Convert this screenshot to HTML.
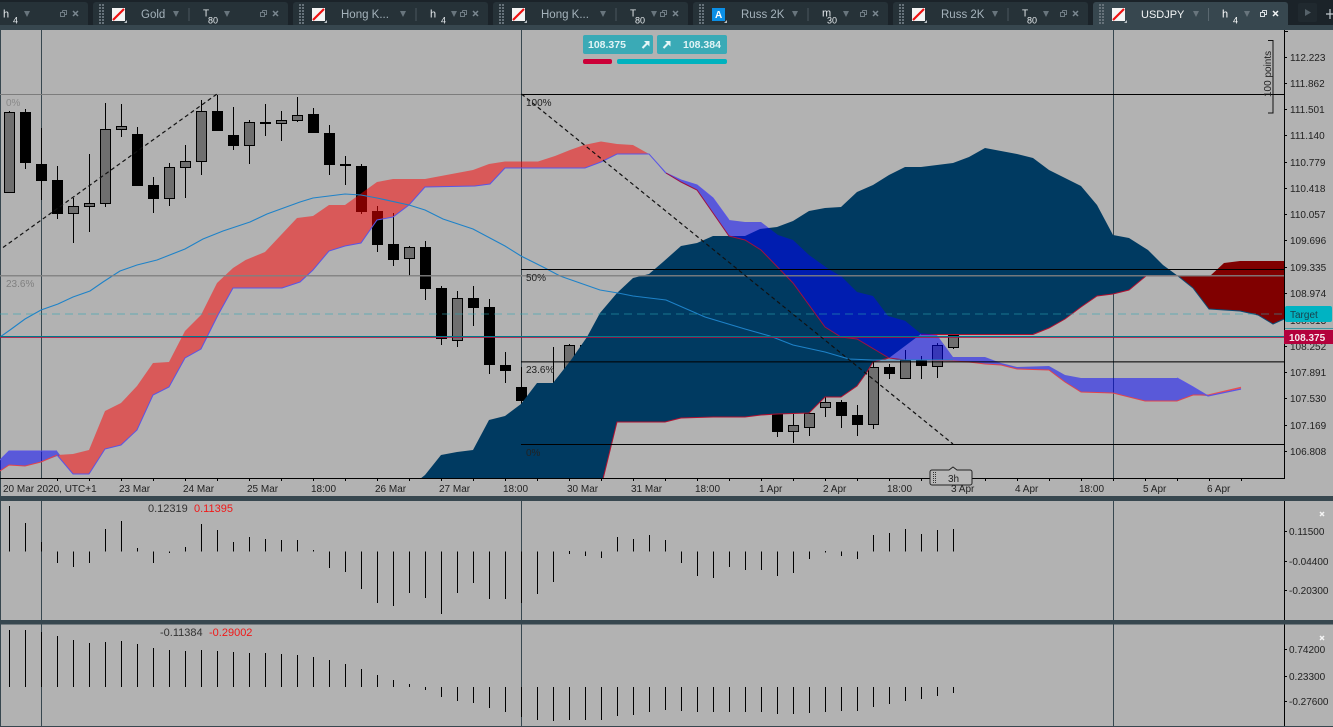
<!DOCTYPE html>
<html><head><meta charset="utf-8"><title>USDJPY</title>
<style>
html,body{margin:0;padding:0;background:#b2b2b2;overflow:hidden}
svg{display:block;font-family:"Liberation Sans",sans-serif}
.ax{font-size:10px;fill:#222}
.t{font-size:10px;fill:#222}
.n{font-size:11.5px;fill:#a4b2bb}
.w{font-size:10px;fill:#e4e9ec}
.s{font-size:9px;fill:#e4e9ec}
</style></head><body>
<svg width="1333" height="727" viewBox="0 0 1333 727" xmlns="http://www.w3.org/2000/svg">
<defs>
<g id="grip"><path d="M0 4V24M3 4V24" stroke="#66727a" stroke-width="2" stroke-dasharray="2 1" fill="none"/></g>
<g id="ic"><rect x="0" y="8" width="13" height="13" fill="#f4f4f4"/><path d="M1 20L12 9" stroke="#f01010" stroke-width="2.200"/><path d="M15 23h-3l3-3z" fill="#b8c0c4"/></g>
<g id="rs"><path d="M2.500 10.500h4v4h-2M0.500 12.500h4v4h-4zM2.500 10.500v2" fill="none" stroke="#6f7c84"/></g>
<g id="cl"><path d="M0 11l5 5M5 11l-5 5" stroke="#7a8790" stroke-width="1.500" fill="none"/></g>
<path id="tr" d="M0 11h6l-3 6z" fill="#68757d"/>
</defs>

<!-- chart background -->
<rect width="1333" height="727" fill="#b2b2b2"/>

<!-- tab bar -->
<rect width="1333" height="30" fill="#1b2329"/>
<rect y="25" width="1333" height="5" fill="#37474f"/>
<path d="M0 2H85a3 3 0 0 1 3 3V25H0z" fill="#263238"/>
<g fill="#263238">
<rect x="93" y="2" width="195" height="25" rx="3"/>
<rect x="293" y="2" width="195" height="25" rx="3"/>
<rect x="493" y="2" width="195" height="25" rx="3"/>
<rect x="693" y="2" width="195" height="25" rx="3"/>
<rect x="893" y="2" width="195" height="25" rx="3"/>
</g>
<rect y="25" width="1333" height="5" fill="#37474f"/>
<rect x="1093" y="2" width="195" height="28" rx="3" fill="#37474f"/>
<rect y="27" x="1093" width="195" height="3" fill="#37474f"/>
<rect x="1298" y="3" width="19" height="19" rx="2" fill="#20292f"/>
<path d="M1305 9l6 3.500-6 3.500z" fill="#56626a"/>
<path d="M1326 14h7M1330 9v10" stroke="#c4ccd0" stroke-width="1.200"/>

<!-- tab 1 -->
<text x="3" y="17.500" class="w" style="font-size:11px">h</text><text x="13" y="23.500" class="s">4</text>
<use href="#tr" x="24"/><use href="#rs" x="60"/><use href="#cl" x="73"/>
<!-- tab 2 -->
<use href="#grip" x="100"/><use href="#ic" x="112"/><text x="141" y="18" class="n">Gold</text><use href="#tr" x="173"/>
<rect x="188.500" y="8" width="1" height="13" fill="#4a565e"/>
<text x="203" y="16.500" class="w">T</text><text x="208" y="23.500" class="s">80</text>
<use href="#tr" x="224"/><use href="#rs" x="260"/><use href="#cl" x="273"/>
<!-- tab 3 -->
<use href="#grip" x="300"/><use href="#ic" x="312"/><text x="341" y="18" class="n">Hong K...</text><use href="#tr" x="400"/>
<rect x="415.500" y="8" width="1" height="13" fill="#4a565e"/>
<text x="430" y="17.500" class="w" style="font-size:11px">h</text><text x="441" y="23.500" class="s">4</text>
<use href="#tr" x="451"/><use href="#rs" x="460"/><use href="#cl" x="473"/>
<!-- tab 4 -->
<use href="#grip" x="500"/><use href="#ic" x="512"/><text x="541" y="18" class="n">Hong K...</text><use href="#tr" x="600"/>
<rect x="615.500" y="8" width="1" height="13" fill="#4a565e"/>
<text x="630" y="16.500" class="w">T</text><text x="635" y="23.500" class="s">80</text>
<use href="#tr" x="651"/><use href="#rs" x="660"/><use href="#cl" x="673"/>
<!-- tab 5 -->
<use href="#grip" x="700"/><rect x="712" y="8" width="13" height="13" fill="#0b8fe6"/><text x="715" y="18" style="font-size:10px;font-weight:bold;fill:#fff">A</text><path d="M727 23h-3l3-3z" fill="#b8c0c4"/>
<text x="741" y="18" class="n">Russ 2K</text><use href="#tr" x="792"/>
<rect x="807.500" y="8" width="1" height="13" fill="#4a565e"/>
<text x="822" y="16.500" class="w" style="font-size:11px">m</text><text x="827" y="23.500" class="s">30</text>
<use href="#tr" x="843"/><use href="#rs" x="860"/><use href="#cl" x="873"/>
<!-- tab 6 -->
<use href="#grip" x="900"/><use href="#ic" x="912"/><text x="941" y="18" class="n">Russ 2K</text><use href="#tr" x="992"/>
<rect x="1007.500" y="8" width="1" height="13" fill="#4a565e"/>
<text x="1022" y="16.500" class="w">T</text><text x="1027" y="23.500" class="s">80</text>
<use href="#tr" x="1043"/><use href="#rs" x="1060"/><use href="#cl" x="1073"/>
<!-- tab 7 active -->
<use href="#grip" x="1100"/><use href="#ic" x="1112"/><text x="1141" y="18" class="n" style="fill:#f2f5f6;font-size:11px">USDJPY</text><use href="#tr" x="1193"/>
<rect x="1208" y="8" width="1" height="13" fill="#5a6870"/>
<text x="1222" y="17.500" class="w" style="font-size:11px;fill:#fff">h</text><text x="1233" y="23.500" class="s" style="fill:#fff">4</text>
<use href="#tr" x="1244"/>
<g transform="translate(1260,0)"><path d="M2.500 10.500h4v4h-2M0.500 12.500h4v4h-4zM2.500 10.500v2" fill="none" stroke="#d8dfe3"/></g>
<g transform="translate(1273,0)"><path d="M0 11l5 5M5 11l-5 5" stroke="#f0f3f4" stroke-width="1.500"/></g>

<!-- left border and vertical grid -->
<rect x="0" y="30" width="1" height="697" fill="#37474f"/>
<path d="M41.500 30V478M521.500 30V478M1113.500 30V478M41.500 500V620M521.500 500V620M1113.500 500V620M41.500 624V726M521.500 624V726M1113.500 624V726" stroke="#37474f" fill="none"/>

<!-- wicks -->
<path stroke="#000" fill="none" d="M9.500 111V193M25.500 109V169M41.500 128V200M57.500 166V219M73.500 198V243M89.500 154V232M105.500 103V207M121.500 104V137M137.500 127V186M153.500 177V213M169.500 163V206M185.500 145V198M201.500 100V175M217.500 94V131M233.500 107V150M249.500 120V164M265.500 104V136M281.500 111V141M297.500 97V122M313.500 108V133M329.500 125V175M345.500 156V185M361.500 164V214M377.500 206V252M393.500 213V266M409.500 246V276M425.500 241V300M441.500 286V345M457.500 291V347M473.500 286V326M489.500 299V374M505.500 352V383M521.500 367V405M553.500 347V383M569.500 344V370M585.500 340V370M777.500 410V437M793.500 414V443M809.500 410V436M825.500 397V417M841.500 400V428M857.500 405V436M873.500 360V429M889.500 364V379M905.500 350V379M921.500 356V379M937.500 343V378M953.500 333V349"/>
<!-- gray bodies -->
<path fill="#6f6f6f" stroke="#000" d="M4.500 112.500h10v80h-10zM68.500 206.500h10v7h-10zM84.500 203.500h10v3h-10zM100.500 129.500h10v74h-10zM116.500 126.500h10v3h-10zM164.500 167.500h10v31h-10zM180.500 161.500h10v6h-10zM196.500 111.500h10v50h-10zM244.500 122.500h10v23h-10zM276.500 120.500h10v3h-10zM292.500 115.500h10v5h-10zM404.500 247.500h10v11h-10zM452.500 298.500h10v42h-10zM564.500 345.500h10v23h-10zM788.500 425.500h10v6h-10zM804.500 413.500h10v14h-10zM820.500 402.500h10v5h-10zM868.500 367.500h10v57h-10zM900.500 360.500h10v18h-10zM932.500 345.500h10v21h-10zM948.500 335.500h10v12h-10z"/>
<!-- black bodies -->
<path fill="#000" stroke="#000" d="M20.500 112.500h10v50h-10zM36.500 164.500h10v16h-10zM52.500 180.500h10v33h-10zM132.500 134.500h10v51h-10zM148.500 185.500h10v13h-10zM212.500 111.500h10v19h-10zM228.500 135.500h10v10h-10zM260.500 122.500h10v1h-10zM308.500 114.500h10v18h-10zM324.500 133.500h10v31h-10zM340.500 164.500h10v1h-10zM356.500 166.500h10v45h-10zM372.500 211.500h10v33h-10zM388.500 244.500h10v15h-10zM420.500 247.500h10v41h-10zM436.500 288.500h10v50h-10zM468.500 298.500h10v9h-10zM484.500 307.500h10v57h-10zM500.500 365.500h10v5h-10zM516.500 387.500h10v13h-10zM580.500 345.500h10v20h-10zM772.500 413.500h10v18h-10zM836.500 402.500h10v13h-10zM852.500 415.500h10v9h-10zM884.500 367.500h10v6h-10zM916.500 360.500h10v5h-10z"/>

<!-- navy cloud -->
<path fill="#003a61" d="M420 479L425 475L441 455L457 452L473 450L489 420L505 416L521 404L537 383L553 383L571 360L587 337L600 313L617 293L633 278L649 274L663 262L681 246L697 243L713 236L745 236L760 229L777 227L793 221L809 211L825 208L841 207L857 192L873 185L889 175L905 167L921 167L937 165L953 163L969 157L985 148L1001 151L1017 154L1033 158L1049 170L1065 178L1081 186L1097 205L1113 235L1129 238L1148 250L1163 265L1178 276L1146 276L1129 290L1113 294L1097 296L1081 307L1065 319L1049 328L1033 334L921 334L905 346L889 358L873 362L867 372L857 386L841 397L825 397L809 413L777 414L761 415L745 417L713 417L681 418L665 422L617 422L603 479z"/>
<path fill="none" stroke="#b01030" stroke-width="1" d="M603 479L617 422L665 422L681 418L713 417L745 417L761 415L777 414L809 413L825 397L841 397L857 386L867 372L873 362L889 358"/>
<path fill="none" stroke="#b01030" stroke-width="1" d="M921 334.500L1033 334.500L1049 328L1065 319L1081 307L1097 296L1113 294L1129 290L1146 276L1178 276"/>

<!-- dark red cloud right -->
<path fill="#800000" d="M1178 276L1210 276L1224 263L1240 261L1284 261L1284 319L1273 324L1258 315L1240 311L1209 309L1193 288z"/>
<path fill="none" stroke="#0f4a72" d="M1178 276L1193 288L1209 309L1240 311L1258 315L1273 324L1284 319"/>

<!-- red translucent cloud -->
<path fill="#f00" fill-opacity=".5" d="M57 455L73 454L89 450L105 411L121 403L137 386L153 363L169 362L185 331L201 315L217 283L233 268L245.600 260L265 252L297 218L313 216L329 205L345 205L377 182L393 179L425 179L457 173L473 170L489 164L505 161.500L538 161.500L555 156L570 150L584 145L601 141.500L617 144L633 145L649 154L617 154L601 162L585 168L505 168L490 184L475 186L425 187L409 205L393 217L377 220L361 243L345 246L329 251L313 270L300 282L282 288L233 288L218 315L201 349L185 358L169 387L153 395L137 430L121 445L105 449L89 474L73 474z"/>
<!-- blue translucent cloud -->
<path fill="#00f" fill-opacity=".5" d="M0 460L9 451L57 451L60 455L41 462L25 466L9 465L0 471zM649 154L666 173L681 180L697 185L713 198L729 220L745 222L761 222L778 235L793 240L809 255L827 268L842 277L857 292L873 296L888 316L905 320.700L920 333L937 335L953 357L985 357L1001 363L1017 367L1049 366L1065 375L1081 378L1177 378L1193 387L1208 396L1193 395L1177 401L1145 401L1113 393L1081 392L1065 382L1049 370L1017 369L1001 365L985 364L969 362L953 361L921 360L905 360L889 358L857 339L841 337L825 327L793 283L761 250L745 240L729 236L713 213L697 190L681 182L665 173z"/>
<!-- cloud edge lines -->
<path fill="none" stroke="#5a55e6" stroke-width="1" d="M0 460L9 451L57 451M57 455L73 474L89 474L105 449L121 445L137 430L153 395L169 387L185 358L201 349L218 315L233 288L282 288L300 282L313 270L329 251L345 246L361 243L377 220L393 217L409 205L425 187L475 186L490 184L505 168L585 168L601 162L617 154L649 154L666 173L681 180L697 185L713 198L729 220"/>
<path fill="none" stroke="#e2444c" stroke-width="1" d="M0 471L9 465L25 466L41 462L57 455"/>
<path fill="none" stroke="#a01040" stroke-width="1" d="M666 173L681 182L697 190L713 213L729 236L745 240L761 250L793 283L825 327L841 337L857 339L889 358L905 360L921 360"/>
<path fill="none" stroke="#e2444c" stroke-width="1" d="M921 360L953 361L969 362L985 364L1001 365L1017 369L1049 370L1065 382L1081 392L1113 393L1145 401L1177 401L1193 395L1209 395"/>
<path fill="none" stroke="#e85050" stroke-width="1.600" d="M1209 395L1241 387.500"/>
<path fill="none" stroke="#5a55e6" stroke-width="1.200" d="M1177 378L1193 387L1208 396L1241 389"/>

<!-- SMA line -->
<path fill="none" stroke="#1e82c8" stroke-width="1.100" d="M0 337L10 330L25 319L41 310L58 304L73 297L90 291L103 282L120 271L137 265L157 260L185 249L203 239L223 231L250 222L267 214L300 202L313 198L345 194L361 195L377 198L409 205L425 210L443 219L473 229L505 246L521 256L545 268L560 276L600 290L618 293L633 296L666 300L705 317L745 329L770 336L793 345L825 352L849 359L873 360L953 360"/>

<!-- horizontal lines -->
<rect x="0" y="94" width="521" height="1" fill="#7c7c7c"/>
<rect x="521" y="94" width="763" height="1" fill="#000"/>
<rect x="521" y="269" width="763" height="1" fill="#000"/>
<rect x="0" y="275" width="1284" height="1.500" fill="#808080" fill-opacity=".9"/>
<rect x="521" y="361" width="763" height="1.600" fill="#000" fill-opacity=".65"/>
<rect x="521" y="444" width="763" height="1" fill="#000"/>
<path d="M0 314H1284" stroke="#2aa7b3" stroke-opacity=".45" stroke-width="1.200" stroke-dasharray="8 5"/>
<rect x="0" y="336" width="1284" height="1" fill="#00788a"/>
<rect x="0" y="337" width="1284" height="1" fill="#b01040" fill-opacity=".8"/>

<!-- dashed fib lines -->
<path d="M3 247.500L217 94M521.500 94L953 444" stroke="#111" stroke-width="1.200" stroke-dasharray="4 3" fill="none"/>

<!-- fib labels -->
<g class="t">
<text x="6" y="106" style="fill:#8a8a8a">0%</text>
<text x="6" y="287" style="fill:#808080">23.6%</text>
<text x="526" y="106">100%</text>
<text x="526" y="281">50%</text>
<text x="526" y="373">23.6%</text>
<text x="526" y="456">0%</text>
</g>

<!-- 100 points -->
<path d="M1268 40.500h5V113h-5" stroke="#111" fill="none"/>
<text transform="translate(1271,97) rotate(-90)" class="t">100 points</text>

<!-- axes -->
<rect x="0" y="478" width="1285" height="1" fill="#000"/>
<rect x="1284" y="30" width="1" height="449" fill="#000"/>
<rect x="1284" y="500" width="1" height="120" fill="#000"/>
<rect x="1284" y="624" width="1" height="102" fill="#000"/>
<path stroke="#000" d="M57.500 478v3M89.500 478v3M121.500 478v3M153.500 478v3M185.500 478v3M217.500 478v3M249.500 478v3M281.500 478v3M313.500 478v3M345.500 478v3M377.500 478v3M409.500 478v3M441.500 478v3M473.500 478v3M505.500 478v3M537.500 478v3M569.500 478v3M601.500 478v3M633.500 478v3M665.500 478v3M697.500 478v3M729.500 478v3M761.500 478v3M793.500 478v3M825.500 478v3M857.500 478v3M889.500 478v3M921.500 478v3M953.500 478v3M985.500 478v3M1017.500 478v3M1049.500 478v3M1081.500 478v3M1113.500 478v3M1145.500 478v3M1177.500 478v3M1209.500 478v3M1241.500 478v3"/>
<path stroke="#000" d="M1285 31.500h3M1285 57.500h2M1285 83.500h2M1285 109.500h2M1285 135.500h2M1285 162.500h2M1285 188.500h2M1285 214.500h2M1285 240.500h2M1285 267.500h2M1285 293.500h2M1285 346.500h2M1285 372.500h2M1285 398.500h2M1285 425.500h2M1285 451.500h2M1285 531.500h2M1285 561.500h2M1285 590.500h2M1285 649.500h2M1285 676.500h2M1285 701.500h2"/>

<!-- time labels -->
<g class="t">
<text x="3" y="492">20 Mar 2020, UTC+1</text>
<text x="119" y="492">23 Mar</text>
<text x="183" y="492">24 Mar</text>
<text x="247" y="492">25 Mar</text>
<text x="311" y="492">18:00</text>
<text x="375" y="492">26 Mar</text>
<text x="439" y="492">27 Mar</text>
<text x="503" y="492">18:00</text>
<text x="567" y="492">30 Mar</text>
<text x="631" y="492">31 Mar</text>
<text x="695" y="492">18:00</text>
<text x="759" y="492">1 Apr</text>
<text x="823" y="492">2 Apr</text>
<text x="887" y="492">18:00</text>
<text x="1015" y="492">4 Apr</text>
<text x="1079" y="492">18:00</text>
<text x="1143" y="492">5 Apr</text>
<text x="1207" y="492">6 Apr</text>
</g>

<!-- price labels -->
<g class="ax">
<text x="1290" y="61">112.223</text>
<text x="1290" y="87">111.862</text>
<text x="1290" y="113">111.501</text>
<text x="1290" y="139">111.140</text>
<text x="1290" y="166">110.779</text>
<text x="1290" y="192">110.418</text>
<text x="1290" y="218">110.057</text>
<text x="1290" y="244">109.696</text>
<text x="1290" y="271">109.335</text>
<text x="1290" y="297">108.974</text>
<text x="1290" y="324">108.613</text>
<text x="1290" y="350">108.252</text>
<text x="1290" y="376">107.891</text>
<text x="1290" y="402">107.530</text>
<text x="1290" y="429">107.169</text>
<text x="1290" y="455">106.808</text>
</g>

<!-- Target and price tags -->
<rect x="1285" y="306" width="47" height="16" rx="2" fill="#00b3c2"/>
<text x="1290" y="318" class="ax" style="fill:#17424d">Target</text>
<rect x="1285" y="328" width="48" height="1" fill="#3f97a3"/>
<rect x="1284" y="330" width="49" height="14" fill="#b3003c"/>
<text x="1289" y="341" style="font-size:10px;font-weight:bold;fill:#f6e8ee">108.375</text>

<!-- 3h tag -->
<path d="M953 467l4 3h13a2 2 0 0 1 2 2v11a2 2 0 0 1-2 2h-38a2 2 0 0 1-2-2v-11a2 2 0 0 1 2-2h17z" fill="#b8b8b8" stroke="#222"/>
<path d="M933.500 472V484M935.500 472V484" stroke="#333" stroke-dasharray="1 1"/>
<text x="948" y="482" class="t">3h</text>
<text x="951" y="492" class="t">3 Apr</text>

<!-- bid/ask widget -->
<rect x="583" y="35" width="70" height="19" rx="2" fill="#3aaab6"/>
<rect x="657" y="35" width="70" height="19" rx="2" fill="#3aaab6"/>
<text x="588" y="48" style="font-size:10.500px;font-weight:bold;fill:#e2f4f6">108.375</text>
<text x="683" y="48" style="font-size:10.500px;font-weight:bold;fill:#e2f4f6">108.384</text>
<path d="M642.500 48l4.500-4.500" stroke="#e6f6f7" stroke-width="2" fill="none"/><path d="M644 41h5.500v5.500z" fill="#e6f6f7"/>
<path d="M663.500 48l4.500-4.500" stroke="#e6f6f7" stroke-width="2" fill="none"/><path d="M665 41h5.500v5.500z" fill="#e6f6f7"/>
<rect x="583" y="59" width="29" height="5" rx="2" fill="#cc0038"/>
<rect x="617" y="59" width="110" height="5" rx="2" fill="#00b2be"/>

<!-- separators -->
<rect y="496" width="1333" height="5" fill="#37474f"/>
<rect y="620" width="1333" height="4.500" fill="#37474f"/>
<rect y="726" width="1333" height="1" fill="#37474f"/>

<!-- panel 1 histogram -->
<path stroke="#000" fill="none" d="M9.500 506V551.500M25.500 523V551.500M41.500 542V551.500M57.500 551.500V563M73.500 551.500V567M89.500 551.500V563M105.500 529V551.500M121.500 521V551.500M137.500 548V551.500M153.500 551.500V563M169.500 551.500V553M185.500 547V551.500M201.500 524V551.500M217.500 530V551.500M233.500 542V551.500M249.500 537V551.500M265.500 539V551.500M281.500 540V551.500M297.500 540V551.500M313.500 550V551.500M329.500 551.500V568M345.500 551.500V572M361.500 551.500V589M377.500 551.500V603M393.500 551.500V606M409.500 551.500V593M425.500 551.500V598M441.500 551.500V614M457.500 551.500V593M473.500 551.500V583M489.500 551.500V599M505.500 551.500V599M521.500 551.500V603M537.500 551.500V594M553.500 551.500V582M569.500 551V554M585.500 551.500V556M601.500 551.500V558M617.500 537V551.500M633.500 539V551.500M649.500 535V551.500M665.500 540V551.500M681.500 551.500V563M697.500 551.500V576M713.500 551.500V578M729.500 551.500V567M745.500 551.500V570M761.500 551.500V570M777.500 551.500V576M793.500 551.500V573M809.500 551.500V559M825.500 551V552.500M841.500 551.500V556M857.500 551.500V559M873.500 535V551.500M889.500 533V551.500M905.500 529V551.500M921.500 534V551.500M937.500 530V551.500M953.500 529V551.500"/>
<text x="148" y="512" class="t" style="font-size:11px;fill:#333">0.12319</text>
<text x="194" y="512" class="t" style="font-size:11px;fill:#f01818">0.11395</text>
<g class="ax">
<text x="1289" y="535">0.11500</text>
<text x="1289" y="565">-0.04400</text>
<text x="1289" y="594">-0.20300</text>
</g>
<path d="M1320 512l4 4M1324 512l-4 4M1320 636l4 4M1324 636l-4 4" stroke="#f4f4f4" stroke-width="1.500"/>

<!-- panel 2 histogram -->
<path stroke="#000" fill="none" d="M9.500 630V687M25.500 630V687M41.500 632V687M57.500 636V687M73.500 640V687M89.500 643V687M105.500 642V687M121.500 641V687M137.500 644V687M153.500 648V687M169.500 650V687M185.500 651V687M201.500 650V687M217.500 651V687M233.500 652V687M249.500 653V687M265.500 653V687M281.500 654V687M297.500 655V687M313.500 657V687M329.500 660V687M345.500 664V687M361.500 669V687M377.500 675V687M393.500 680V687M409.500 684V687M425.500 687V690M441.500 687V697M457.500 687V701M473.500 687V703M489.500 687V708M505.500 687V712M521.500 687V717M537.500 687V720M553.500 687V721M569.500 687V720M585.500 687V720M601.500 687V720M617.500 687V716M633.500 687V715M649.500 687V712M665.500 687V710M681.500 687V711M697.500 687V712M713.500 687V712M729.500 687V712M745.500 687V712M761.500 687V712M777.500 687V714M793.500 687V714M809.500 687V713M825.500 687V712M841.500 687V711M857.500 687V711M873.500 687V707M889.500 687V704M905.500 687V701M921.500 687V699M937.500 687V696M953.500 687V693"/>
<text x="160" y="636" class="t" style="font-size:11px;fill:#333">-0.11384</text>
<text x="209" y="636" class="t" style="font-size:11px;fill:#f01818">-0.29002</text>
<g class="ax">
<text x="1289" y="653">0.74200</text>
<text x="1289" y="680">0.23300</text>
<text x="1289" y="705">-0.27600</text>
</g>
</svg>
</body></html>
